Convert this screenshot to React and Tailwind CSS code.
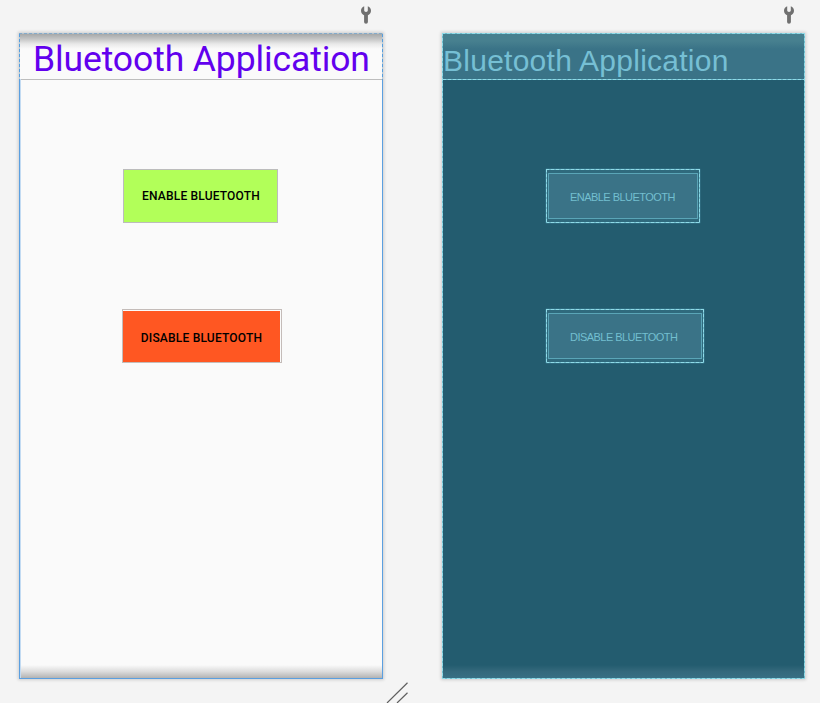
const Wrench = () => (
  <svg className="block h-[18px] w-[10px]" viewBox="0 0 10 18">
    <path
      d="M3.2 0.2 C1.2 1 0 2.8 0 4.7 C0 7 1.3 8.5 3.1 9.3 V16 Q3.1 17.7 5 17.7 Q6.9 17.7 6.9 16 V9.3 C8.7 8.5 10 7 10 4.7 C10 2.8 8.8 1 6.8 0.2 V4.6 Q6.8 6 5 6 Q3.2 6 3.2 4.6 Z"
      fill="#707070"
    />
  </svg>
);

const DashH = ({ className }) => (
  <div className={`absolute h-px bg-[repeating-linear-gradient(90deg,#8fdbe8_0_3px,#6fbccd_3px_5px)] ${className}`} />
);
const DashV = ({ className }) => (
  <div className={`absolute w-px bg-[repeating-linear-gradient(180deg,#8fdbe8_0_3px,#6fbccd_3px_5px)] ${className}`} />
);

const DashedFrame = () => (
  <>
    <DashH className="inset-x-0 top-0" />
    <DashH className="inset-x-0 bottom-0" />
    <DashV className="inset-y-0 left-0" />
    <DashV className="inset-y-0 right-0" />
  </>
);

const BlueprintButton = ({ label, className }) => (
  <div className={`relative ml-[103px] h-[54px] border border-[#61b4c7] bg-[#2f6a7d] px-px py-[3px] shadow-[0_0_1px_#61b4c7] ${className}`}>
    <div className="flex h-full w-full items-center border border-[#5aa5b7] bg-[#3a7387] pl-[21px] pt-[2px]">
      <span className="whitespace-nowrap font-['Liberation_Sans',sans-serif] text-[11px] leading-none tracking-[-0.54px] text-[#73bfd0]">
        {label}
      </span>
    </div>
    <div className="absolute -inset-px">
      <DashedFrame />
    </div>
  </div>
);

function DesignSurface() {
  return (
    <div className="relative h-[646px] w-[364px] border border-[#5b9fe0] bg-[#fafafa] shadow-[0px_0px_3px_1px_rgba(0,0,0,0.16)]">
      <div className="h-[46px] border-b border-[#bdbdbd] bg-[linear-gradient(180deg,#a6a8a9_0,#c4c5c5_5px,#e9e9e9_10px,#fafafa_15px)] pl-[13px]">
        <h1 className="whitespace-nowrap pt-[4px] font-['Roboto',sans-serif] text-[35.5px] leading-[43px] tracking-[-0.11px] text-[#6200ee]">
          Bluetooth Application
        </h1>
      </div>
      <div className="ml-[103px] mt-[89px] flex h-[54px] w-[155px] items-center justify-center border border-[#bcbcbc] bg-[#b2ff59] pl-px font-['Roboto',sans-serif] text-[12px] font-medium tracking-[0.18px] text-black">
        <span className="whitespace-nowrap">ENABLE BLUETOOTH</span>
      </div>
      <div className="ml-[102px] mt-[86px] h-[54px] w-[160px] border border-[#c4bcb9] bg-[#fafafa] pr-px pt-px">
        <div className="flex h-full items-center justify-center bg-[#ff5722] pt-[2px] font-['Roboto',sans-serif] text-[12px] font-medium tracking-[0.2px] text-black">
          <span className="whitespace-nowrap">DISABLE BLUETOOTH</span>
        </div>
      </div>
      <div className="absolute inset-x-0 bottom-0 h-[13px] bg-[linear-gradient(180deg,#fafafa,#dcdcdc_50%,#b3b3b3)]" />
      <div className="absolute -inset-x-px -top-px h-px bg-[repeating-linear-gradient(90deg,#83aacb_0_3px,#b7c3cb_3px_5px)]" />
      <div className="absolute -left-px bottom-0 top-[45px] w-[2px] bg-[linear-gradient(90deg,#5b9fe0_50%,#c3dbf2_50%)]" />
      <div className="absolute -left-px top-0 h-[45px] w-px bg-[repeating-linear-gradient(180deg,#569ede_0_3px,#b8cbd9_3px_5px)]" />
      <div className="absolute -right-px top-0 h-[45px] w-px bg-[repeating-linear-gradient(180deg,#569ede_0_3px,#b8cbd9_3px_5px)]" />
    </div>
  );
}

function BlueprintSurface() {
  return (
    <div className="relative h-[646px] w-[363px] border border-[#63b9cd] bg-[#235c6f] shadow-[0px_0px_3px_1px_rgba(0,0,0,0.16)]">
      <div className="relative h-[46px] bg-[linear-gradient(180deg,#47808f_0,#47808f_7px,#3a7387_15px)]">
        <h1 className="whitespace-nowrap pt-[9px] font-['Liberation_Sans',sans-serif] text-[30px] leading-[36px] tracking-[0.26px] text-[#76bfd4]">
          Bluetooth Application
        </h1>
        <DashH className="inset-x-0 bottom-0" />
      </div>
      <div className="mt-[89px]">
        <BlueprintButton label="ENABLE BLUETOOTH" className="w-[154px]" />
      </div>
      <div className="mt-[86px]">
        <BlueprintButton label="DISABLE BLUETOOTH" className="w-[158px]" />
      </div>
      <div className="absolute inset-x-0 bottom-0 h-[13px] bg-[linear-gradient(180deg,#235c6f,#34697c_50%,#387084)]" />
      <div className="absolute -inset-px">
        <DashedFrame />
      </div>
    </div>
  );
}

export default function App() {
  return (
    <div className="relative flex h-[703px] w-[820px] overflow-hidden bg-[#f4f4f4] pl-[19px]">
      <section className="w-[364px]">
        <div className="flex h-[33px] justify-end pr-[12px] pt-[6px]">
          <Wrench />
        </div>
        <DesignSurface />
      </section>
      <section className="ml-[59px] w-[363px]">
        <div className="flex h-[33px] justify-end pr-[11px] pt-[6px]">
          <Wrench />
        </div>
        <BlueprintSurface />
      </section>
      <svg className="absolute bottom-0 left-[386px] h-[21px] w-[23px]" viewBox="0 0 23 21">
        <path d="M1 21 L21.5 0.8 M11 21 L21.5 10.8" stroke="#606060" strokeWidth="1.2" fill="none" />
      </svg>
    </div>
  );
}
